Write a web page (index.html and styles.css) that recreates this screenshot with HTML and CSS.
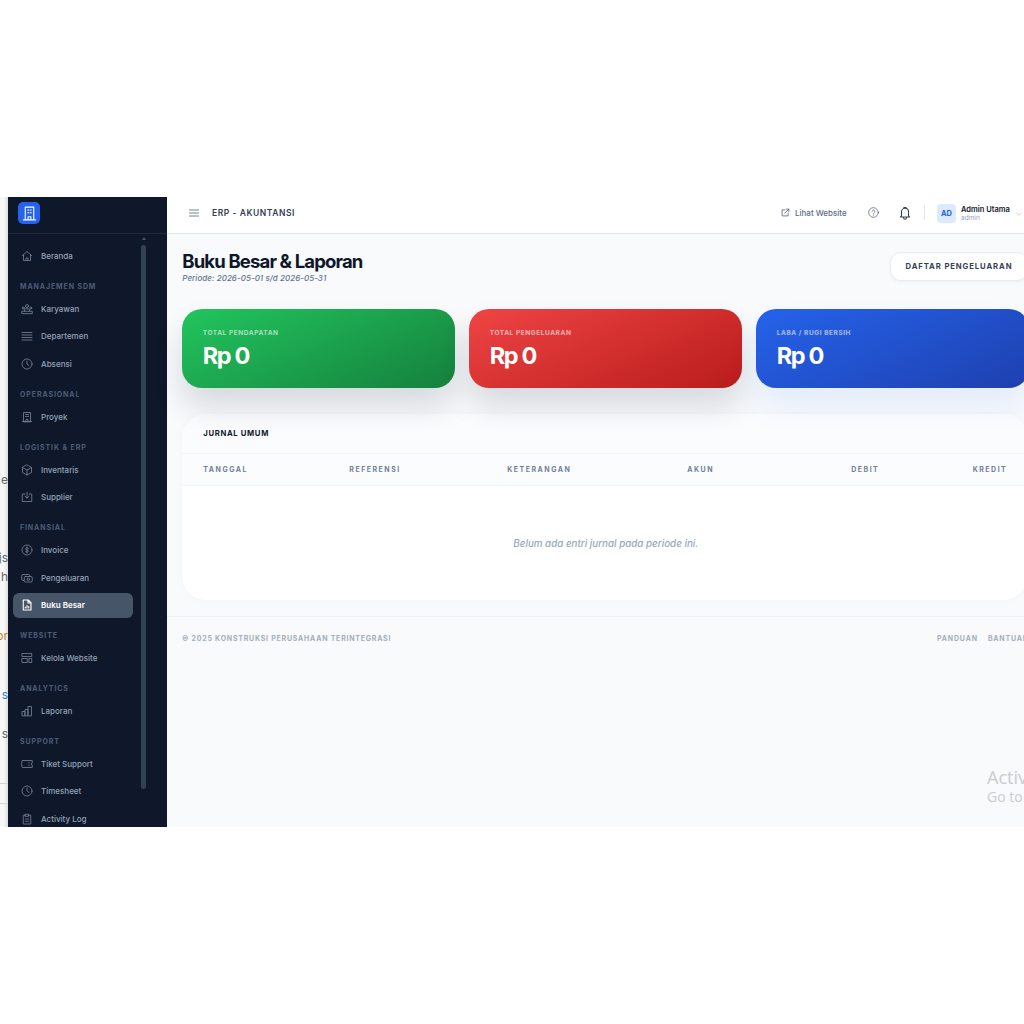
FILE: index.html
```html
<!DOCTYPE html>
<html lang="id">
<head>
    <meta charset="UTF-8">
    <title>ERP - Akuntansi</title>
    <link rel="stylesheet" href="styles.css">
</head>
<body>
<svg class="defs" width="0" height="0">
    <symbol id="i-home" viewBox="0 0 24 24"><path d="M2.500 11.500L12 3l9.500 8.500M5 9.500V21h14V9.500M10 21v-5h4v5"/></symbol>
    <symbol id="i-users" viewBox="0 0 24 24"><circle cx="12" cy="6" r="3"/><circle cx="4.500" cy="10" r="2"/><circle cx="19.500" cy="10" r="2"/><path d="M1.500 20.500v-4h21v4zM7 16.500V14a2.500 2.500 0 0 1 2.500-2.500h5A2.500 2.500 0 0 1 17 14v2.500"/></symbol>
    <symbol id="i-lines" viewBox="0 0 24 24"><path d="M2 5h20M2 10h20M2 15h20M2 20h20"/></symbol>
    <symbol id="i-clock" viewBox="0 0 24 24"><circle cx="12" cy="12" r="10"/><path d="M12 6v6l4 3"/></symbol>
    <symbol id="i-building" viewBox="0 0 24 24"><path d="M5 21V3h14v18zM3 21h18M10 21v-4h4v4M9 7h2M13 7h2M9 11h2M13 11h2"/></symbol>
    <symbol id="i-box" viewBox="0 0 24 24"><path d="M12 2l9 5v10l-9 5-9-5V7zM3 7l9 5 9-5M12 12v10"/></symbol>
    <symbol id="i-tray" viewBox="0 0 24 24"><path d="M8 6H2.500v15h19V6H16M12 2.500V14M8 10.500l4 3.500 4-3.500"/></symbol>
    <symbol id="i-dollar" viewBox="0 0 24 24"><circle cx="12" cy="12" r="10"/><path d="M15 9.200c-.6-1-1.700-1.500-3-1.500-1.700 0-3 .8-3 2.100 0 2.900 6 1.500 6 4.400 0 1.300-1.300 2.100-3 2.100-1.300 0-2.400-.5-3-1.500M12 6v12"/></symbol>
    <symbol id="i-cash" viewBox="0 0 24 24"><path d="M6 17H4a2.500 2.500 0 0 1-2.500-2.500v-7A2.500 2.500 0 0 1 4 5h11a2.500 2.500 0 0 1 2.500 2.500V9"/><rect x="6.500" y="9" width="16" height="11" rx="2.500"/><circle cx="14.500" cy="14.500" r="2.500"/></symbol>
    <symbol id="i-doc" viewBox="0 0 24 24"><path d="M4.500 2h10L20 7.500V22H4.500zM14 2.500V8h5.500M8.500 18v-2M12 18v-5M15.500 18v-3"/></symbol>
    <symbol id="i-layout" viewBox="0 0 24 24"><path d="M2.500 3h19v6h-19zM2.500 13h10v8h-10zM16.500 13h5v8h-5z"/></symbol>
    <symbol id="i-chart" viewBox="0 0 24 24"><path d="M2 21v-8h6v8zM8 21V9h6v12zM14 21V3h7v18z"/></symbol>
    <symbol id="i-ticket" viewBox="0 0 24 24"><path d="M4 5h18.500v5a2 2 0 0 0 0 4v5H4a2.500 2.500 0 0 1-2.500-2.500v-9A2.500 2.500 0 0 1 4 5zM16 9v1M16 14v1"/></symbol>
    <symbol id="i-clip" viewBox="0 0 24 24"><path d="M8.500 4.500H4.500V22h15V4.500h-4M8.500 2.500h7v4h-7zM8.500 12h7M8.500 16.500h7"/></symbol>
</svg>

<div class="frame">
    <div class="behind">
        <div class="frag f-e">.e</div>
        <div class="frag f-js">.js</div>
        <div class="frag f-h">h</div>
        <div class="frag f-or">or</div>
        <div class="frag f-s1">s</div>
        <div class="frag f-s2">s</div>
        <div class="rule r1"></div>
        <div class="rule r2"></div>
    </div>

    <aside class="sidebar">
        <div class="brand">
            <span class="logo">
                <svg viewBox="0 0 24 24"><path d="M6 21V3h12v18zM3.500 21h17M10 21v-4.500h4V21M9.500 7h1.500M13 7h1.500M9.500 11h1.500M13 11h1.500"/></svg>
            </span>
        </div>
        <div class="menu-wrap">
            <nav class="menu">
                <a class="item"><svg class="ico"><use href="#i-home"/></svg>Beranda</a>
                <div class="group">Manajemen SDM</div>
                <a class="item"><svg class="ico"><use href="#i-users"/></svg>Karyawan</a>
                <a class="item"><svg class="ico"><use href="#i-lines"/></svg>Departemen</a>
                <a class="item"><svg class="ico"><use href="#i-clock"/></svg>Absensi</a>
                <div class="group">Operasional</div>
                <a class="item"><svg class="ico"><use href="#i-building"/></svg>Proyek</a>
                <div class="group">Logistik &amp; ERP</div>
                <a class="item"><svg class="ico"><use href="#i-box"/></svg>Inventaris</a>
                <a class="item"><svg class="ico"><use href="#i-tray"/></svg>Supplier</a>
                <div class="group">Finansial</div>
                <a class="item"><svg class="ico"><use href="#i-dollar"/></svg>Invoice</a>
                <a class="item"><svg class="ico"><use href="#i-cash"/></svg>Pengeluaran</a>
                <a class="item active"><svg class="ico"><use href="#i-doc"/></svg>Buku Besar</a>
                <div class="group">Website</div>
                <a class="item"><svg class="ico"><use href="#i-layout"/></svg>Kelola Website</a>
                <div class="group">Analytics</div>
                <a class="item"><svg class="ico"><use href="#i-chart"/></svg>Laporan</a>
                <div class="group">Support</div>
                <a class="item"><svg class="ico"><use href="#i-ticket"/></svg>Tiket Support</a>
                <a class="item"><svg class="ico"><use href="#i-clock"/></svg>Timesheet</a>
                <a class="item"><svg class="ico"><use href="#i-clip"/></svg>Activity Log</a>
            </nav>
            <div class="scroll">
                <span class="arrow"></span>
                <span class="thumb"></span>
            </div>
        </div>
    </aside>

    <div class="main">
        <header class="topbar">
            <div class="top-left">
                <svg class="burger" viewBox="0 0 24 24"><path d="M3 6h18M3 12h18M3 18h18"/></svg>
                <span class="crumb">ERP - AKUNTANSI</span>
            </div>
            <div class="top-right">
                <a class="site-link">
                    <svg viewBox="0 0 24 24"><path d="M10 5H3v16h16v-7M14 3h7v7M21 3L10 14"/></svg>
                    Lihat Website
                </a>
                <svg class="help" viewBox="0 0 24 24"><circle cx="12" cy="12" r="10.500"/><path d="M9 9.500a3 3 0 1 1 4.500 2.600c-1 .6-1.500 1.100-1.500 2.400M12 17.500v.5"/></svg>
                <svg class="bell" viewBox="0 0 24 24"><path d="M6 16.500V10a6 6 0 0 1 12 0v6.500l2 2.500H4zM10 2.500h4M9.500 20a2.500 2.500 0 0 0 5 0"/></svg>
                <span class="divider"></span>
                <div class="user">
                    <span class="avatar">AD</span>
                    <div class="user-text">
                        <div class="user-name">Admin Utama</div>
                        <div class="user-role">admin</div>
                    </div>
                    <svg class="chev" viewBox="0 0 24 24"><path d="M5 9l7 7 7-7"/></svg>
                </div>
            </div>
        </header>

        <div class="content">
            <div class="page-head">
                <div>
                    <h1>Buku Besar &amp; Laporan</h1>
                    <p class="period">Periode: 2026-05-01 s/d 2026-05-31</p>
                </div>
                <button class="btn">DAFTAR PENGELUARAN</button>
            </div>

            <div class="cards">
                <div class="card green">
                    <div class="card-label">TOTAL PENDAPATAN</div>
                    <div class="card-value">Rp 0</div>
                </div>
                <div class="card red">
                    <div class="card-label">TOTAL PENGELUARAN</div>
                    <div class="card-value">Rp 0</div>
                </div>
                <div class="card blue">
                    <div class="card-label">LABA / RUGI BERSIH</div>
                    <div class="card-value">Rp 0</div>
                </div>
            </div>

            <section class="journal">
                <div class="journal-title">JURNAL UMUM</div>
                <div class="thead">
                    <span>TANGGAL</span>
                    <span>REFERENSI</span>
                    <span>KETERANGAN</span>
                    <span>AKUN</span>
                    <span class="num">DEBIT</span>
                    <span class="num">KREDIT</span>
                </div>
                <div class="empty">Belum ada entri jurnal pada periode ini.</div>
            </section>
        </div>

        <footer class="foot">
            <span class="foot-copy">© 2025 KONSTRUKSI PERUSAHAAN TERINTEGRASI</span>
            <span class="foot-links"><span>PANDUAN</span><span>BANTUAN</span></span>
        </footer>
    </div>

    <div class="activate">
        <div class="a1">Activate Windows</div>
        <div class="a2">Go to Settings to activate Windows.</div>
    </div>
</div>
</body>
</html>
```

FILE: styles.css
```css
* {
    margin: 0;
    padding: 0;
    box-sizing: border-box;
}
html, body {
    background: #fff;
}
body {
    padding-top: 197px;
    font-family: Inter, "Noto Sans", sans-serif;
    overflow: hidden;
    height: 1024px;
}
.defs {
    position: absolute;
}
svg {
    fill: none;
    stroke: currentColor;
    stroke-width: 1.5;
    stroke-linecap: round;
    stroke-linejoin: round;
}

.frame {
    display: flex;
    position: relative;
    width: 1024px;
    height: 630px;
    overflow: hidden;
    background: #f8fafc;
}

/* window behind the sidebar */
.behind {
    width: 8px;
    flex: none;
    overflow: hidden;
    padding-top: 276px;
    background: linear-gradient(to right, #f7f7f7 50%, #dcdcdc);
}
.frag {
    display: flex;
    justify-content: flex-end;
    height: 14px;
    font-size: 12px;
    line-height: 14px;
    color: #666;
    white-space: nowrap;
}
.f-js { margin-top: 64px; }
.f-h { margin-top: 5px; }
.f-or { margin-top: 45px; color: #b8862b; }
.f-s1 { margin-top: 45px; color: #2f7fc0; }
.f-s2 { margin-top: 25px; }
.rule {
    height: 1px;
    background: #d4d4d4;
}
.r1 { margin-top: 42px; }
.r2 { margin-top: 19px; }

/* sidebar */
.sidebar {
    width: 159px;
    flex: none;
    background: #0f172a;
    display: flex;
    flex-direction: column;
    overflow: hidden;
}
.brand {
    height: 37px;
    flex: none;
    padding: 5px 0 0 10px;
    border-bottom: 1px solid #1e293b;
}
.logo {
    display: flex;
    align-items: center;
    justify-content: center;
    width: 22px;
    height: 22px;
    background: #2563eb;
    border-radius: 5px;
    color: #fff;
}
.logo svg {
    width: 17px;
    height: 17px;
}
.menu-wrap {
    display: flex;
    flex: 1;
    min-height: 0;
}
.menu {
    width: 132px;
    flex: none;
    padding: 9.6px 0 0 5px;
    overflow: hidden;
}
.item {
    display: flex;
    align-items: center;
    gap: 8px;
    width: 120px;
    height: 25px;
    margin-bottom: 2.4px;
    padding-left: 8px;
    border-radius: 6px;
    font-size: 8px;
    font-weight: 500;
    color: #94a3b8;
}
.item.active {
    background: #475569;
    color: #fff;
    font-weight: 600;
}
.ico {
    width: 12px;
    height: 12px;
    flex: none;
    stroke-width: 1.7;
    color: #718096;
}
.item.active .ico {
    color: #fff;
    stroke-width: 2.2;
}
.group {
    height: 13px;
    margin: 11.5px 0 3.5px;
    padding-left: 7px;
    font-size: 7px;
    line-height: 13px;
    font-weight: 700;
    letter-spacing: 0.9px;
    text-transform: uppercase;
    color: #4c5d78;
}
.scroll {
    width: 5px;
    margin-left: 1px;
    padding-top: 3px;
}
.arrow {
    display: block;
    width: 0;
    height: 3px;
    margin: 0 auto 5px;
    border: 2px solid transparent;
    border-top: 0;
    border-bottom: 3px solid #475569;
}
.thumb {
    display: block;
    height: 544px;
    background: #334155;
    border-radius: 3px;
}

/* main */
.main {
    flex: 1;
    min-width: 0;
    display: flex;
    flex-direction: column;
}
.topbar {
    height: 37px;
    flex: none;
    display: flex;
    align-items: center;
    justify-content: space-between;
    padding: 0 0 5px 21px;
    background: #fff;
    border-bottom: 1px solid #e2e8f0;
}
.top-left {
    display: flex;
    align-items: center;
    gap: 12px;
}
.burger {
    width: 12px;
    height: 12px;
    margin-top: 1px;
    color: #475569;
}
.crumb {
    font-size: 8.5px;
    font-weight: 600;
    letter-spacing: 0.55px;
    color: #334155;
}
.top-right {
    display: flex;
    align-items: center;
    width: 243px;
    flex: none;
}
.site-link {
    display: flex;
    align-items: center;
    gap: 5px;
    width: 87px;
    font-size: 8px;
    font-weight: 500;
    color: #5b6b82;
}
.site-link svg {
    width: 9px;
    height: 9px;
    stroke-width: 2;
    color: #475569;
}
.help {
    width: 11px;
    height: 11px;
    color: #475569;
    margin-right: 19px;
}
.bell {
    width: 14px;
    height: 14px;
    color: #334155;
    margin-right: 13px;
    stroke-width: 1.8;
}
.divider {
    width: 1px;
    height: 15px;
    background: #e2e8f0;
    margin-right: 12px;
    margin-left: -1px;
}
.user {
    display: flex;
    align-items: center;
    gap: 5px;
    margin-top: 2px;
    white-space: nowrap;
}
.avatar {
    width: 19px;
    height: 19px;
    border-radius: 4px;
    background: #dbeafe;
    color: #2563eb;
    font-size: 7.5px;
    font-weight: 700;
    display: flex;
    align-items: center;
    justify-content: center;
}
.user-name {
    font-size: 7.5px;
    font-weight: 600;
    line-height: 9px;
    color: #0f172a;
}
.user-role {
    font-size: 6.5px;
    line-height: 9px;
    color: #94a3b8;
}
.chev {
    width: 8px;
    height: 8px;
    color: #94a3b8;
}

/* content */
.content {
    padding: 15px 0 16px 15.3px;
    width: 861px;
    flex: none;
    border-bottom: 1px solid #eef1f5;
}
.page-head {
    display: flex;
    justify-content: space-between;
    align-items: flex-start;
    height: 60px;
}
h1 {
    font-size: 18.5px;
    line-height: 24px;
    font-weight: 700;
    letter-spacing: -0.85px;
    color: #0f172a;
}
.period {
    font-size: 8px;
    line-height: 10px;
    font-style: italic;
    font-weight: 500;
    letter-spacing: 0.05px;
    color: #64748b;
}
.btn {
    width: 138px;
    height: 29px;
    flex: none;
    margin-top: 3px;
    background: #fff;
    border: 1px solid #e8edf3;
    border-radius: 11px;
    box-shadow: 0 1px 3px rgba(15, 23, 42, 0.05);
    font-family: inherit;
    font-size: 7.7px;
    font-weight: 700;
    letter-spacing: 0.9px;
    color: #334155;
    text-align: center;
}
.cards {
    display: grid;
    grid-template-columns: 272.4px 272.4px 272.4px;
    gap: 14.6px;
}
.card {
    height: 79px;
    border-radius: 20px;
    padding: 20px 20.5px 0;
    color: #fff;
}
.card.green {
    background: linear-gradient(155deg, #22c55e, #15803d);
    box-shadow: 0 18px 30px rgba(15, 23, 42, 0.14);
}
.card.red {
    background: linear-gradient(155deg, #ef4444, #b91c1c);
    box-shadow: 0 18px 30px rgba(15, 23, 42, 0.14);
}
.card.blue {
    background: linear-gradient(155deg, #2563eb, #1e40af);
    box-shadow: 0 18px 30px rgba(37, 99, 235, 0.09);
}
.card-label {
    font-size: 6.5px;
    line-height: 9px;
    font-weight: 700;
    letter-spacing: 0.57px;
    opacity: 0.6;
}
.card-value {
    margin-top: 4px;
    font-size: 23.5px;
    line-height: 27px;
    font-weight: 700;
    letter-spacing: -1.4px;
}
.journal {
    margin-top: 26px;
    width: 845px;
    height: 186px;
    background: #fff;
    border-radius: 24px;
    box-shadow: 0 0 10px rgba(15, 23, 42, 0.03);
    overflow: hidden;
}
.journal-title {
    height: 40px;
    padding: 15px 0 0 21px;
    font-size: 7.7px;
    line-height: 10px;
    font-weight: 700;
    letter-spacing: 0.65px;
    color: #0f172a;
    background: #fbfcfe;
    border-bottom: 1px solid #f1f5f9;
}
.thead {
    display: grid;
    grid-template-columns: 146px 158px 180px 64px 128px 128px;
    height: 32px;
    padding-left: 21px;
    align-items: center;
    background: #fbfcfe;
    border-bottom: 1px solid #f1f5f9;
    font-size: 7px;
    font-weight: 700;
    letter-spacing: 1.5px;
    color: #718096;
}
.num {
    text-align: right;
}
.empty {
    padding: 52px 0 0 2px;
    font-size: 9.8px;
    line-height: 12px;
    font-style: italic;
    font-weight: 500;
    color: #9aa7bb;
    text-align: center;
}
.foot {
    display: flex;
    justify-content: space-between;
    width: 857px;
    padding: 17px 0 0 15px;
    font-size: 7px;
    line-height: 10px;
    font-weight: 700;
    letter-spacing: 0.82px;
    color: #a3aec0;
    white-space: nowrap;
}
.foot-copy {
    letter-spacing: 0.77px;
}
.foot-links {
    display: flex;
    gap: 10px;
    width: 87px;
    flex: none;
}

/* windows watermark */
.activate {
    position: absolute;
    left: 987px;
    top: 569px;
    white-space: nowrap;
    font-family: "Open Sans", sans-serif;
    color: #c9ccd0;
}
.a1 {
    font-size: 18px;
    line-height: 22px;
}
.a2 {
    font-size: 14px;
    line-height: 18px;
}
```
